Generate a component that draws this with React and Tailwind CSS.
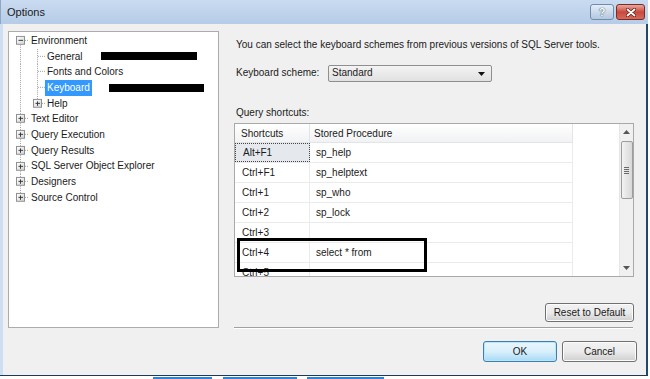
import React from 'react';

const shortcuts = [
  ['Alt+F1', 'sp_help'],
  ['Ctrl+F1', 'sp_helptext'],
  ['Ctrl+1', 'sp_who'],
  ['Ctrl+2', 'sp_lock'],
  ['Ctrl+3', ''],
  ['Ctrl+4', 'select * from'],
  ['Ctrl+5', ''],
];

const tree = [
  { label: 'Environment', kind: 'rootOpen' },
  { label: 'General', kind: 'child', redact: 'general' },
  { label: 'Fonts and Colors', kind: 'child' },
  { label: 'Keyboard', kind: 'child', selected: true, redact: 'keyboard' },
  { label: 'Help', kind: 'childPlus' },
  { label: 'Text Editor', kind: 'root' },
  { label: 'Query Execution', kind: 'root' },
  { label: 'Query Results', kind: 'root' },
  { label: 'SQL Server Object Explorer', kind: 'root' },
  { label: 'Designers', kind: 'root' },
  { label: 'Source Control', kind: 'rootLast' },
];

function ExpandBox({ cx, open }) {
  return (
    <g>
      <rect x={cx - 4} y={3.5} width={8} height={8} fill="url(#boxfill)" stroke="#8e8f8f" />
      <line x1={cx - 2} y1={7.5} x2={cx + 2.5} y2={7.5} stroke="#3a3a3a" />
      {!open && <line x1={cx} y1={5.5} x2={cx} y2={10} stroke="#3a3a3a" />}
    </g>
  );
}

function Guide({ kind }) {
  const dot = { stroke: '#a3a3a3', strokeDasharray: '1 1' };
  const v1 = 11.5;
  const v2 = 28.5;
  const wide = kind === 'child' || kind === 'childPlus';
  return (
    <svg width={wide ? 36 : 20} height="100%" viewBox={`0 0 ${wide ? 36 : 20} 16`} preserveAspectRatio="none" className="shrink-0">
      <defs>
        <linearGradient id="boxfill" x1="0" y1="0" x2="1" y2="1">
          <stop offset="0" stopColor="#ffffff" />
          <stop offset="1" stopColor="#d4d4d4" />
        </linearGradient>
      </defs>
      {kind === 'rootOpen' && (
        <>
          <line x1={v1} y1={12} x2={v1} y2={16} {...dot} />
          <line x1={16} y1={7.5} x2={20} y2={7.5} {...dot} />
          <ExpandBox cx={v1} open />
        </>
      )}
      {(kind === 'root' || kind === 'rootLast') && (
        <>
          <line x1={v1} y1={0} x2={v1} y2={3} {...dot} />
          {kind === 'root' && <line x1={v1} y1={12} x2={v1} y2={16} {...dot} />}
          <line x1={16} y1={7.5} x2={20} y2={7.5} {...dot} />
          <ExpandBox cx={v1} />
        </>
      )}
      {kind === 'child' && (
        <>
          <line x1={v1} y1={0} x2={v1} y2={16} {...dot} />
          <line x1={v2} y1={0} x2={v2} y2={16} {...dot} />
          <line x1={29} y1={7.5} x2={36} y2={7.5} {...dot} />
        </>
      )}
      {kind === 'childPlus' && (
        <>
          <line x1={v1} y1={0} x2={v1} y2={16} {...dot} />
          <line x1={v2} y1={0} x2={v2} y2={3} {...dot} />
          <line x1={33} y1={7.5} x2={36} y2={7.5} {...dot} />
          <ExpandBox cx={v2} />
        </>
      )}
    </svg>
  );
}

function TreeRow({ item }) {
  return (
    <div className="relative flex h-[15.7px] items-stretch">
      <Guide kind={item.kind} />
      <span
        className={`flex items-center px-[2px] leading-none ${
          item.selected ? 'bg-[#3399ff] text-white' : 'text-[#1a1a1a]'
        }`}
      >
        {item.label}
      </span>
      {item.redact === 'general' && (
        <div className="absolute left-[92px] top-[3.3px] h-[7.6px] w-[96px] bg-black" />
      )}
      {item.redact === 'keyboard' && (
        <div className="absolute left-[100px] top-[3.9px] h-[8.4px] w-[95px] bg-black" />
      )}
    </div>
  );
}

function WinButton({ children, primary = false, className = '' }) {
  return (
    <button
      type="button"
      className={`flex items-center justify-center rounded-[3px] border bg-gradient-to-b text-[#1a1a1a] ${
        primary
          ? 'border-[#3c7fb1] from-[#eaf6fd] via-[#d9f0fc] to-[#a7d9f5] shadow-[inset_0_0_0_1px_#b9e6fb]'
          : 'border-[#707070] from-[#f2f2f2] via-[#ebebeb] to-[#cfcfcf] shadow-[inset_0_0_0_1px_#fcfcfc]'
      } ${className}`}
    >
      {children}
    </button>
  );
}

function ShortcutTable() {
  return (
    <div className="flex h-[154px] w-[400px] border border-[#a9a9a9] bg-white">
      <div className="flex w-[385px] flex-col overflow-hidden">
        <div className="flex h-[19px] shrink-0">
          <div className="flex w-[338px] border-b border-[#e3e4e6] bg-gradient-to-b from-white to-[#f1f2f4]">
            <div className="flex w-[75px] items-center border-r border-[#e3e4e6] pl-[6px]">Shortcuts</div>
            <div className="flex flex-1 items-center border-r border-[#e3e4e6] pl-[4px]">Stored Procedure</div>
          </div>
        </div>
        {shortcuts.map(([key, proc], i) => (
          <div key={key} className="flex h-[20px] w-[338px] shrink-0 border-b border-[#ebebeb]">
            <div
              className={`flex w-[75px] items-center pl-[7px] ${
                i === 0
                  ? 'border border-dotted border-[#444] bg-[#e5e9ee] pl-[6px]'
                  : 'border-r border-[#ebebeb]'
              }`}
            >
              {key}
            </div>
            <div className="flex flex-1 items-center border-r border-[#ebebeb] pl-[6px]">{proc}</div>
          </div>
        ))}
      </div>
      <div className="ml-auto flex w-[14px] flex-col items-center border-l border-[#e6e6e6] bg-[#f0f0f0]">
        <svg width="7" height="4" viewBox="0 0 7 4" className="mt-[6px]">
          <path d="M0 4 L3.5 0 L7 4 Z" fill="#555" />
        </svg>
        <div className="mt-[7px] flex h-[58px] w-[12px] flex-col items-center justify-center gap-[1px] rounded-[2px] border border-[#9d9d9d] bg-gradient-to-r from-[#f3f3f3] to-[#d8d8d8]">
          <div className="h-px w-[5px] bg-[#6a6a6a]" />
          <div className="h-px w-[5px] bg-[#6a6a6a]" />
          <div className="h-px w-[5px] bg-[#6a6a6a]" />
          <div className="h-px w-[5px] bg-[#6a6a6a]" />
        </div>
        <svg width="7" height="4" viewBox="0 0 7 4" className="mb-[6px] mt-auto">
          <path d="M0 0 L3.5 4 L7 0 Z" fill="#555" />
        </svg>
      </div>
    </div>
  );
}

export default function App() {
  return (
    <div className="relative h-[379px] w-[650px] overflow-hidden bg-white font-['Liberation_Sans',Arial,sans-serif] text-[10px] text-[#1a1a1a]">
      <div className="flex h-[376px] w-[648px] flex-col border-b border-[#1e3a52]">
        {/* title bar */}
        <div className="flex h-[24px] shrink-0 items-center border-l border-[#8ea7c2] bg-gradient-to-b from-[#c9dbf0] to-[#b6cce7] pl-[6px] pr-[3px]">
          <span className="text-[11px] text-[#1b1b1b]">Options</span>
          <div className="ml-auto flex items-center gap-[2px]">
            <div className="flex h-[16px] w-[24px] items-center justify-center rounded-[3px] border border-[#6f8cad] bg-gradient-to-b from-[#e4edf7] to-[#b4c8e0]">
              <span className="text-[11px] font-bold leading-none text-white [text-shadow:0_0_1px_#3b506a,0_0_1px_#3b506a]">?</span>
            </div>
            <div className="flex h-[16px] w-[29px] items-center justify-center rounded-[3px] border border-[#7a2b22] bg-gradient-to-b from-[#e8a89e] via-[#c9483c] to-[#d56a5c]">
              <svg width="10" height="9" viewBox="0 0 10 9">
                <path d="M1.5 1.5 L8.5 7.5 M8.5 1.5 L1.5 7.5" stroke="#5a1c16" strokeWidth="3.2" strokeLinecap="round" />
                <path d="M1.5 1.5 L8.5 7.5 M8.5 1.5 L1.5 7.5" stroke="#ffffff" strokeWidth="1.8" strokeLinecap="round" />
              </svg>
            </div>
          </div>
        </div>

        {/* dialog body */}
        <div className="flex flex-1 flex-col border-l-[3px] border-r-2 border-l-[#cddff2] border-r-[#1f4a6b] bg-[#f0f0f0]">
          <div className="flex pl-[5px] pt-[7px]">
            <div className="h-[297px] w-[211px] shrink-0 border border-[#acacac] bg-white pt-px">
              {tree.map((item) => (
                <TreeRow key={item.label} item={item} />
              ))}
            </div>

            <div className="relative ml-[15px] flex w-[400px] flex-col">
              <p className="mt-[7px] pl-[2px] leading-[14px]">
                You can select the keyboard schemes from previous versions of SQL Server tools.
              </p>
              <div className="mt-[13px] flex items-start pl-[2px]">
                <span className="mt-[1px] w-[92px] leading-[14px]">Keyboard scheme:</span>
                <div className="flex h-[17px] w-[164px] items-center rounded-[2px] border border-[#8e8f8f] bg-gradient-to-b from-[#f4f4f4] to-[#e1e1e1] pl-[3px] pr-[6px]">
                  <span className="-mt-[2px]">Standard</span>
                  <svg width="7" height="4" viewBox="0 0 7 4" className="ml-auto">
                    <path d="M0 0 L3.5 4 L7 0 Z" fill="#111" />
                  </svg>
                </div>
              </div>
              <p className="mt-[24px] pl-[2px] leading-[14px]">Query shortcuts:</p>
              <div className="mt-[3px]">
                <ShortcutTable />
              </div>
              <div className="mt-[26px] flex justify-end">
                <WinButton className="h-[19px] w-[89px]">Reset to Default</WinButton>
              </div>
              <div className="mt-[5px] h-px w-[399px] bg-[#a0a0a0] shadow-[0_1px_0_#ffffff]" />
              <div className="pointer-events-none absolute left-[3px] top-[207px] h-[34px] w-[190px] border-[3px] border-black" />
            </div>
          </div>

          <div className="mt-[13px] flex justify-end gap-[5px] pr-[9px]">
            <WinButton primary className="h-[21px] w-[74px]">OK</WinButton>
            <WinButton className="h-[21px] w-[75px]">Cancel</WinButton>
          </div>
        </div>
      </div>

      {/* strip of the taskbar underneath */}
      <div className="flex h-[3px] items-end">
        <div className="ml-[153px] h-[2px] w-[59px] bg-[#2f83d6]" />
        <div className="ml-[11px] h-[2px] w-[74px] bg-[#2f83d6]" />
        <div className="ml-[10px] h-[2px] w-[77px] bg-[#2f83d6]" />
      </div>
    </div>
  );
}
